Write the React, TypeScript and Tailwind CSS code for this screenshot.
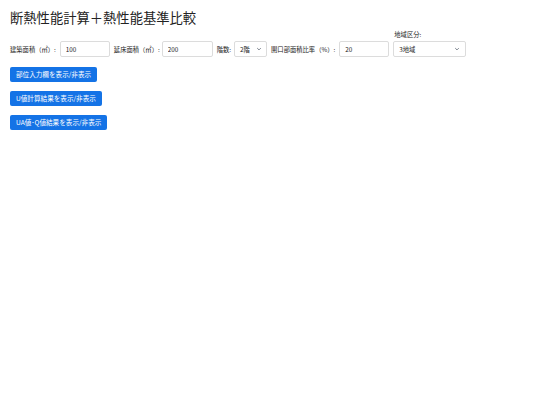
import React, { useState } from "react";

const font = { fontFamily: '"Noto Sans CJK JP", "Noto Sans", sans-serif' };

const Chevron = () => (
  <svg width="6" height="6" viewBox="0 0 10 10" className="text-gray-600">
    <path d="M2 3.5 L5 6.5 L8 3.5" fill="none" stroke="currentColor" strokeWidth="1.2" />
  </svg>
);

const App = () => {
  const [showParts, setShowParts] = useState(false);
  const [showU, setShowU] = useState(false);
  const [showUA, setShowUA] = useState(false);

  return (
    <div className="min-h-[405px] bg-white px-[10px] pt-[9px] text-[#222]" style={font}>
      <h1 className="text-[13.3px] leading-[18px] font-normal">断熱性能計算＋熱性能基準比較</h1>

      <div className="mt-[3px] flex items-end gap-[4px] text-[6.3px]">
        <div className="flex items-center gap-[4px]">
          <span>建築面積（㎡）:</span>
          <input
            className="w-[50px] h-[16px] rounded-[2px] border border-[#dcdcdc] px-[5px] text-[6.3px] outline-none"
            defaultValue="100"
          />
        </div>
        <div className="flex items-center gap-[2px]">
          <span>延床面積（㎡）:</span>
          <input
            className="w-[51px] h-[16px] rounded-[2px] border border-[#dcdcdc] px-[5px] text-[6.3px] outline-none"
            defaultValue="200"
          />
        </div>
        <div className="flex items-center gap-[3px]">
          <span>階数:</span>
          <div className="flex w-[33px] h-[16px] items-center justify-between rounded-[2px] border border-[#dcdcdc] pl-[5px] pr-[4px]">
            <span>2階</span>
            <Chevron />
          </div>
        </div>
        <div className="flex items-center gap-[4px]">
          <span>開口部面積比率（%）:</span>
          <input
            className="w-[50px] h-[16px] rounded-[2px] border border-[#dcdcdc] px-[5px] text-[6.3px] outline-none"
            defaultValue="20"
          />
        </div>
        <div className="flex flex-col gap-[2px]">
          <span className="pl-[1px]">地域区分:</span>
          <div className="flex w-[73px] h-[16px] items-center justify-between rounded-[2px] border border-[#dcdcdc] pl-[5px] pr-[5px]">
            <span>3地域</span>
            <Chevron />
          </div>
        </div>
      </div>

      <div className="mt-[10px] flex flex-col items-start gap-[9px] text-[6.6px] text-white">
        <button
          onClick={() => setShowParts(!showParts)}
          className="h-[15px] rounded-[2px] bg-[#1473e6] px-[6px]"
        >
          部位入力欄を表示/非表示
        </button>
        <button
          onClick={() => setShowU(!showU)}
          className="h-[15px] rounded-[2px] bg-[#1473e6] px-[6px]"
        >
          U値計算結果を表示/非表示
        </button>
        <button
          onClick={() => setShowUA(!showUA)}
          className="h-[15px] rounded-[2px] bg-[#1473e6] px-[6px]"
        >
          UA値･Q値結果を表示/非表示
        </button>
      </div>
    </div>
  );
};

export default App;
